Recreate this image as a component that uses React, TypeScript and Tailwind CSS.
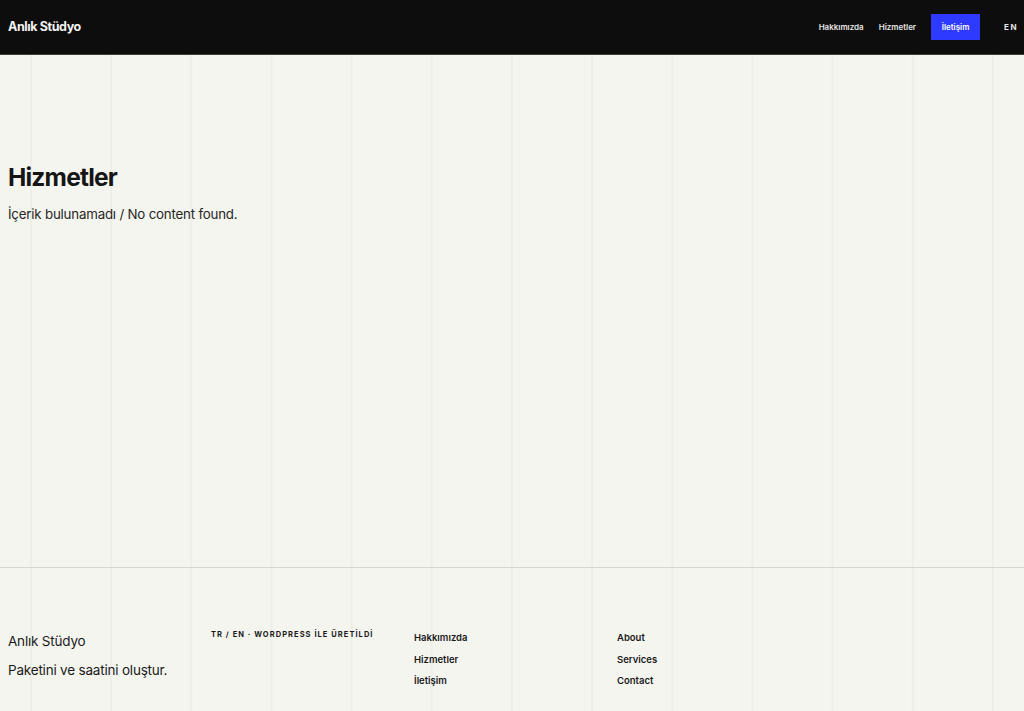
const grid =
  'bg-[#f5f5f0] bg-[linear-gradient(to_right,#eeeee9_2px,transparent_2px)] bg-[length:80.17px_100%] bg-[position:30px_0]';

export default function App() {
  return (
    <div className={`min-h-[711px] flex flex-col font-['Inter',sans-serif] ${grid}`}>
      <header className="h-[55px] bg-[#0d0d0d] border-b border-[#3d3d39] flex items-center justify-between pl-2 pr-[6px]">
        <div className="text-[12.5px] font-bold text-[#f3f3f3] tracking-[-0.4px]">Anlık Stüdyo</div>
        <nav className="flex items-center text-[8px] font-semibold text-[#e6e6e6]">
          <a className="mr-[15px]">Hakkımızda</a>
          <a className="mr-[15px]">Hizmetler</a>
          <a className="bg-[#2e3aff] text-white w-[49px] h-[26px] flex items-center justify-center mr-[24px]">İletişim</a>
          <span className="tracking-[1.5px] font-bold text-[8px]">EN</span>
        </nav>
      </header>

      <main className="flex-1 h-[512px] px-2 pt-[103px]">
        <h1 className="text-[24.5px] font-bold text-[#151515] tracking-[-0.8px] leading-[38px]">Hizmetler</h1>
        <p className="mt-[9px] text-[13.3px] text-[#262626] tracking-[-0.2px]">İçerik bulunamadı / No content found.</p>
      </main>

      <footer className="border-t border-[#d6d6d1] h-[144px] px-2 pt-[60px] grid grid-cols-[203px_203px_203px_203px] text-[#1a1a1a]">
        <div className="pt-[4px]">
          <p className="text-[13.5px] tracking-[-0.2px] leading-[18px]">Anlık Stüdyo</p>
          <p className="mt-[11px] text-[13.5px] tracking-[-0.2px] leading-[18px]">Paketini ve saatini oluştur.</p>
        </div>
        <div className="text-[7.5px] font-bold tracking-[1.05px] uppercase leading-[14px]">TR / EN · WORDPRESS İLE ÜRETİLDİ</div>
        <ul className="flex flex-col gap-[8px] text-[9.5px] font-semibold leading-[13.5px] pt-[3px]">
          <li>Hakkımızda</li>
          <li>Hizmetler</li>
          <li>İletişim</li>
        </ul>
        <ul className="flex flex-col gap-[8px] text-[9.5px] font-semibold leading-[13.5px] pt-[3px]">
          <li>About</li>
          <li>Services</li>
          <li>Contact</li>
        </ul>
      </footer>
    </div>
  );
}
